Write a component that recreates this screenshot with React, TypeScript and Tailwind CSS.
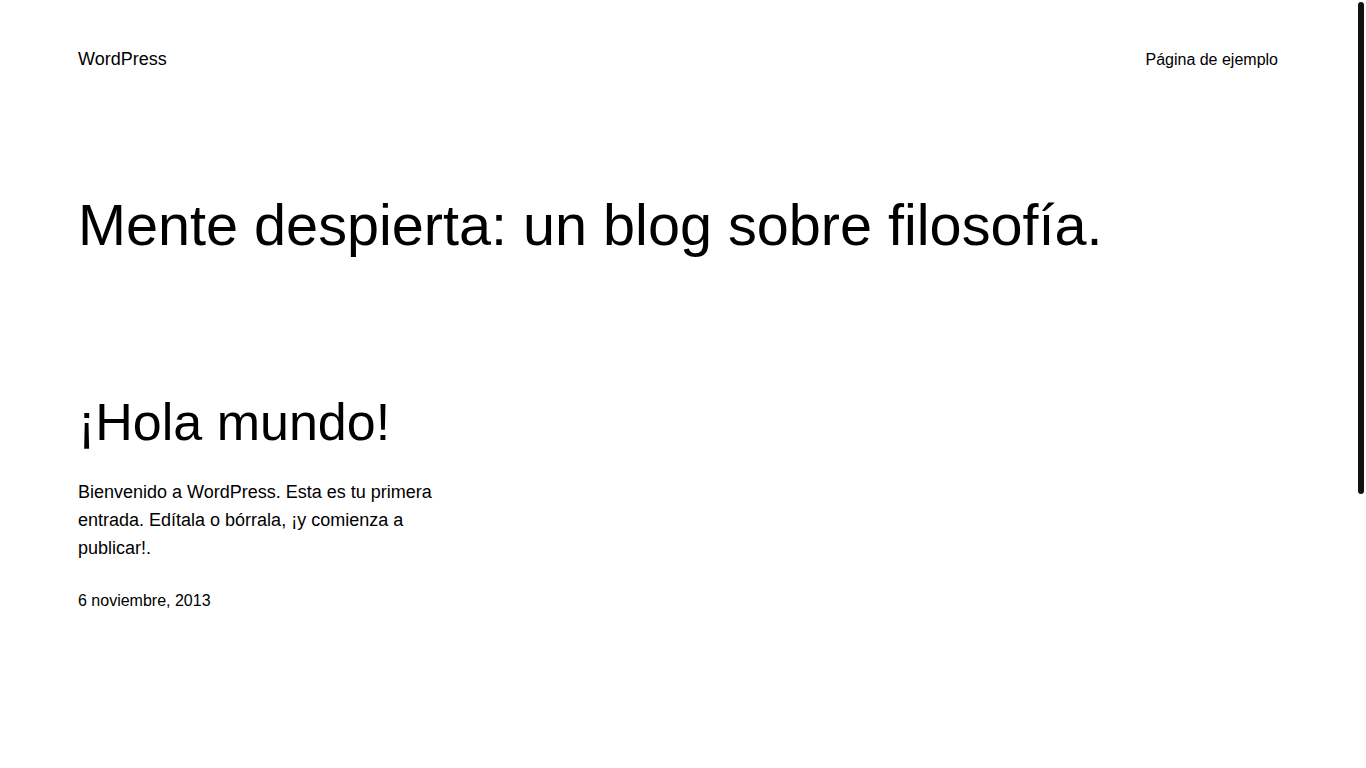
export default function App() {
  return (
    <div className="flex min-h-screen bg-white">
      <div className="flex-1 px-[78px] font-['Liberation_Sans',Arial,sans-serif] text-black">
        <header className="flex items-baseline justify-between pt-[46px]">
          <a href="#" className="text-[18px] leading-[27px]">
            WordPress
          </a>
          <nav>
            <a href="#" className="text-[16px] leading-[27px]">
              Página de ejemplo
            </a>
          </nav>
        </header>

        <h1 className="mt-[118px] text-[57.6px] font-normal leading-[1.2]">
          Mente despierta: un blog sobre filosofía.
        </h1>

        <main className="mt-[131px] grid grid-cols-3 gap-6">
          <article>
            <h2 className="text-[52px] font-normal leading-[1.2]">
              ¡Hola mundo!
            </h2>
            <p className="mt-[24px] text-[18px] leading-[28.4px]">
              Bienvenido a WordPress. Esta es tu primera entrada. Edítala o
              bórrala, ¡y comienza a publicar!.
            </p>
            <p className="mt-[26px] text-[16px] leading-[24px]">
              6 noviembre, 2013
            </p>
          </article>
        </main>
      </div>

      {/* scrollbar of the page */}
      <div className="sticky top-0 h-screen w-[10px] shrink-0 pl-[2px] pt-[2px]">
        <div className="h-[492px] w-[6px] rounded-full bg-[#111]" />
      </div>
    </div>
  );
}
